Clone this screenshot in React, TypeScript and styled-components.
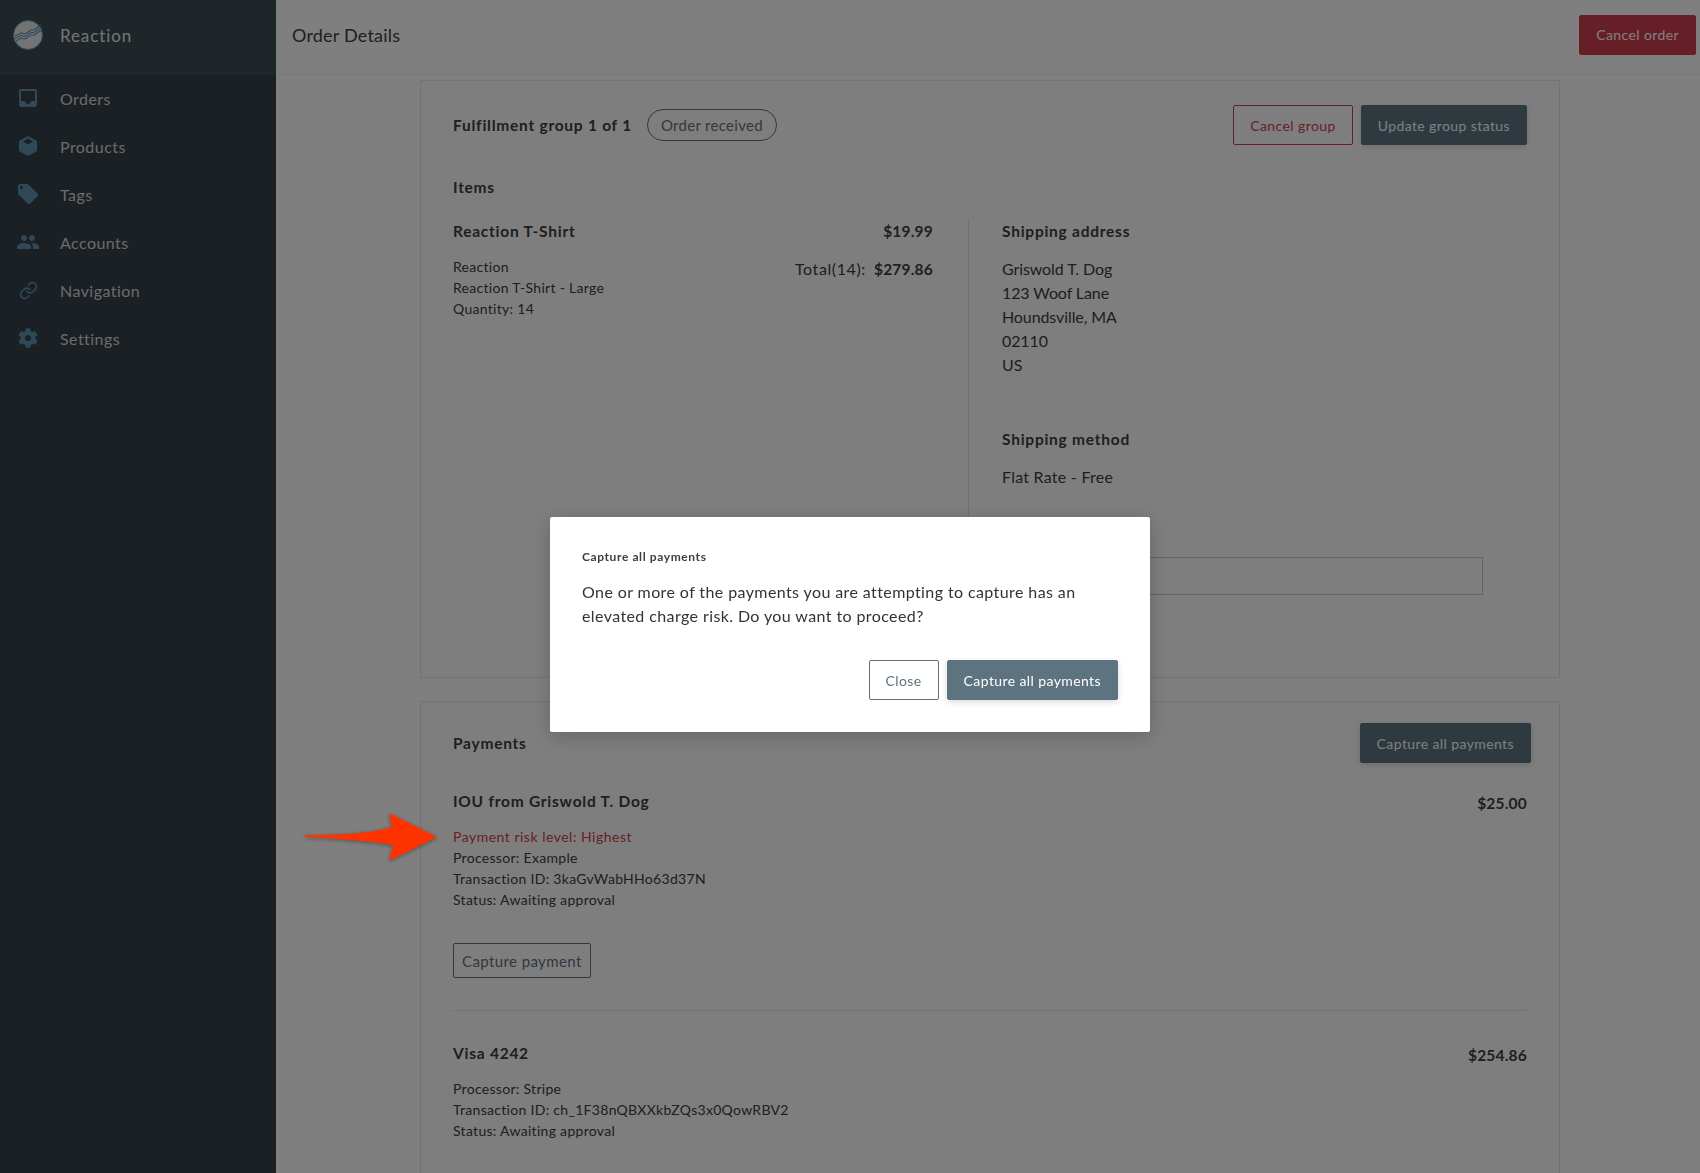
import React from 'react';
import styled, {createGlobalStyle} from 'styled-components';
import {MdInbox, MdLocalOffer, MdPeople} from 'react-icons/md';
import {FaCog} from 'react-icons/fa';
import {Link as LinkIcon} from 'lucide-react';

const GlobalStyle = createGlobalStyle`
	html, body {
		margin: 0;
		height: 100%;
		overflow: hidden;
		background: #fff;
		font-family: Lato, "Open Sans", sans-serif;
		font-size: 16px;
		letter-spacing: 0.6px;
		color: #3e3e3e;
	}
	* { box-sizing: border-box; }
`;

const SIDEBAR_BG = '#36414a';

const Page = styled.div`
	display: flex;
	width: 1700px;
	height: 1173px;
	overflow: hidden;
`;

const Sidebar = styled.aside`
	flex: 0 0 276px;
	background: ${SIDEBAR_BG};
`;

const Brand = styled.div`
	display: flex;
	align-items: center;
	gap: 17px;
	height: 75px;
	padding: 0 0 5px 13px;
	background: #3f4c55;
	color: #e8e8e8;
	font-size: 17px;
	letter-spacing: 0.9px;
`;

const NavList = styled.nav`
	display: flex;
	flex-direction: column;
	margin-top: -1px;
`;

const NavItem = styled.div`
	display: flex;
	align-items: center;
	height: 48px;
	color: #d6d6d6;
	font-size: 16px;
	letter-spacing: 0.45px;
`;

const NavIcon = styled.span`
	display: flex;
	flex: 0 0 60px;
	justify-content: center;
	padding-right: 4px;
	color: #5f93b3;
`;

const Main = styled.main`
	flex: 1;
	min-width: 0;
`;

const Header = styled.header`
	display: flex;
	align-items: center;
	justify-content: space-between;
	height: 75px;
	padding: 0 4px 5px 16px;
	border-bottom: 1px solid #f0f0f0;
	font-size: 18px;
	letter-spacing: 0.2px;
`;

const Button = styled.button<{$variant: 'danger' | 'dangerOutline' | 'dark' | 'light' | 'outline'}>`
	height: ${(p) => (p.$variant === 'outline' ? '35px' : '40px')};
	padding: 0 ${(p) => (p.$variant === 'outline' ? '8px' : '16px')};
	border-radius: 2px;
	border: 1px solid;
	font: inherit;
	font-size: 14px;
	letter-spacing: 0.4px;
	white-space: nowrap;
	${(p) => {
		switch (p.$variant) {
			case 'danger':
				return 'background: #cd3f4c; border-color: #cd3f4c; color: #fff;';
			case 'dangerOutline':
				return 'background: transparent; border-color: #cd3f4c; color: #cd3f4c;';
			case 'dark':
				return 'background: #5d7380; border-color: #5d7380; color: #fff; box-shadow: 0 2px 6px rgba(0,0,0,.15);';
			case 'light':
				return 'background: #fff; border-color: #5d7380; color: #5d7380;';
			default:
				return 'background: transparent; border-color: #5d7380; color: #5d7380; font-size: 15px; letter-spacing: 0.4px;';
		}
	}}
`;

const Content = styled.div`
	width: 1140px;
	margin: 5px 0 0 144px;
`;

const Card = styled.section<{$last?: boolean}>`
	padding: ${(p) => (p.$last ? '21px 32px 40px' : '24px 32px 82px')};
	margin-bottom: 23px;
	border: 1px solid #e6e6e6;
	background: #fdfdfd;
`;

const CardHead = styled.div`
	display: flex;
	align-items: center;
	justify-content: space-between;
	height: 40px;
`;

const Left = styled.div`
	display: flex;
	align-items: center;
	gap: 15px;
`;

const Actions = styled.div<{$bleed?: boolean}>`
	display: flex;
	gap: 8px;
	margin-right: ${(p) => (p.$bleed ? '-4px' : '0')};
`;

const Strong = styled.div`
	font-weight: 700;
	line-height: 24px;
	font-size: 15.5px;
	letter-spacing: 0.75px;
`;

const Price = styled(Strong)`
	letter-spacing: 0.2px;
`;

const Pill = styled.span`
	display: inline-flex;
	align-items: center;
	height: 32px;
	padding: 0 13px;
	border: 1px solid #5d7380;
	border-radius: 16px;
	color: #5d7380;
	font-size: 15px;
	letter-spacing: 0.3px;
`;

const ItemsTitle = styled(Strong)`
	margin: 30px 0 20px;
`;

const Columns = styled.div`
	display: grid;
	grid-template-columns: 515px 1fr;
`;

const ItemsColumn = styled.div`
	padding-right: 35px;
`;

const ShipColumn = styled.div`
	padding-left: 33px;
	border-left: 1px solid #e6e6e6;
`;

const SplitRow = styled.div`
	display: flex;
	justify-content: space-between;
	align-items: flex-start;
`;

const Small = styled.div<{$top?: number}>`
	margin-top: ${(p) => p.$top ?? 0}px;
	font-size: 14px;
	line-height: 21px;
	letter-spacing: 0.3px;
`;

const Risk = styled.div`
	color: #cd3f4c;
	letter-spacing: 0.5px;
`;

const TotalLine = styled.div`
	display: flex;
	gap: 8px;
	margin-top: 14px;
	line-height: 24px;
`;

const Amount = styled(Price)`
	padding-top: 2px;
`;

const Address = styled.div`
	margin-top: 14px;
	line-height: 24px;
	letter-spacing: -0.1px;
`;

const FlatRate = styled(Address)`
	letter-spacing: 0.25px;
`;

const ShipHeading = styled(Strong)`
	margin-top: 50px;
`;

const TrackingInput = styled.div`
	height: 38px;
	margin: 68px 44px 0 0;
	border: 1px solid #c8c8c8;
`;

const PaymentsHead = styled.div`
	margin-top: 26px;
`;

const CaptureRow = styled.div`
	margin: 33px 0 32px;
`;

const Rule = styled.hr`
	margin: 0 0 30px;
	border: 0;
	border-top: 1px solid #e6e6e6;
`;

const Overlay = styled.div`
	position: fixed;
	inset: 0;
	background: rgba(0, 0, 0, 0.5);
`;

const Modal = styled.div`
	position: fixed;
	left: 550px;
	top: 517px;
	width: 600px;
	height: 215px;
	padding: 32px;
	border-radius: 2px;
	background: #fff;
	box-shadow: 0 4px 20px rgba(0, 0, 0, 0.2);
`;

const ModalTitle = styled.div`
	font-size: 12px;
	font-weight: 700;
	line-height: 16px;
`;

const ModalBody = styled.div`
	margin-top: 15px;
	line-height: 24px;
	letter-spacing: 0.4px;
	color: #333;
`;

const ModalActions = styled.div`
	display: flex;
	justify-content: flex-end;
	gap: 8px;
	margin-top: 32px;
`;

const Arrow = styled.svg`
	position: fixed;
	left: 300px;
	top: 808px;
	filter: drop-shadow(0 1px 2px rgba(0, 0, 0, 0.35));
`;

const Logo = () => (
	<svg width="30" height="30" viewBox="0 0 30 30">
		<circle cx="15" cy="15" r="14.5" fill="#e6e6e6" stroke="#4b93bd" />
		<g fill="none" stroke="#4b93bd" strokeWidth="1.1">
			<path d="M2 16 L8 13 L12 14 L18 10 L21 10 L28 5" />
			<path d="M2 18.5 L8 15.5 L12 16.5 L18 12.5 L21 12.5 L28.5 7.5" />
			<path d="M3 21 L8 18 L12 19 L18 15 L21 15 L29 10" />
		</g>
	</svg>
);

const CubeIcon = () => (
	<svg width="18" height="20" viewBox="0 0 18 20">
		<path d="M9 0 L18 5 V15 L9 20 L0 15 V5 Z" fill="currentColor" />
		<path d="M9 2.5 L14 5.5 L9 8.5 L4 5.5 Z" fill={SIDEBAR_BG} />
	</svg>
);

const NAV_ITEMS = [
	{label: 'Orders', icon: <MdInbox size={24} />},
	{label: 'Products', icon: <CubeIcon />},
	{label: 'Tags', icon: <MdLocalOffer size={24} />},
	{label: 'Accounts', icon: <MdPeople size={24} />},
	{label: 'Navigation', icon: <LinkIcon size={19} strokeWidth={2} />},
	{label: 'Settings', icon: <FaCog size={20} />},
];

export default function App() {
	return (
		<>
			<GlobalStyle />
			<Page>
				<Sidebar>
					<Brand>
						<Logo />
						Reaction
					</Brand>
					<NavList>
						{NAV_ITEMS.map((item) => (
							<NavItem key={item.label}>
								<NavIcon>{item.icon}</NavIcon>
								{item.label}
							</NavItem>
						))}
					</NavList>
				</Sidebar>
				<Main>
					<Header>
						Order Details
						<Button $variant="danger">Cancel order</Button>
					</Header>
					<Content>
						<Card>
							<CardHead>
								<Left>
									<Strong>Fulfillment group 1 of 1</Strong>
									<Pill>Order received</Pill>
								</Left>
								<Actions>
									<Button $variant="dangerOutline">Cancel group</Button>
									<Button $variant="dark">Update group status</Button>
								</Actions>
							</CardHead>
							<ItemsTitle>Items</ItemsTitle>
							<Columns>
								<ItemsColumn>
									<SplitRow>
										<Strong>Reaction T-Shirt</Strong>
										<Price>$19.99</Price>
									</SplitRow>
									<SplitRow>
										<Small $top={13}>
											Reaction
											<br />
											Reaction T-Shirt - Large
											<br />
											Quantity: 14
										</Small>
										<TotalLine>
											Total(14):
											<Price>$279.86</Price>
										</TotalLine>
									</SplitRow>
								</ItemsColumn>
								<ShipColumn>
									<Strong>Shipping address</Strong>
									<Address>
										Griswold T. Dog
										<br />
										123 Woof Lane
										<br />
										Houndsville, MA
										<br />
										02110
										<br />
										US
									</Address>
									<ShipHeading>Shipping method</ShipHeading>
									<FlatRate>Flat Rate - Free</FlatRate>
									<TrackingInput />
								</ShipColumn>
							</Columns>
						</Card>
						<Card $last>
							<CardHead>
								<Strong>Payments</Strong>
								<Actions $bleed>
									<Button $variant="dark">Capture all payments</Button>
								</Actions>
							</CardHead>
							<PaymentsHead>
								<SplitRow>
									<Strong>IOU from Griswold T. Dog</Strong>
									<Amount>$25.00</Amount>
								</SplitRow>
								<Small $top={11}>
									<Risk>Payment risk level: Highest</Risk>
									Processor: Example
									<br />
									Transaction ID: 3kaGvWabHHo63d37N
									<br />
									Status: Awaiting approval
								</Small>
							</PaymentsHead>
							<CaptureRow>
								<Button $variant="outline">Capture payment</Button>
							</CaptureRow>
							<Rule />
							<SplitRow>
								<Strong>Visa 4242</Strong>
								<Amount>$254.86</Amount>
							</SplitRow>
							<Small $top={11}>
								Processor: Stripe
								<br />
								Transaction ID: ch_1F38nQBXXkbZQs3x0QowRBV2
								<br />
								Status: Awaiting approval
							</Small>
						</Card>
					</Content>
				</Main>
			</Page>
			<Overlay />
			<Modal>
				<ModalTitle>Capture all payments</ModalTitle>
				<ModalBody>
					One or more of the payments you are attempting to capture has an elevated charge risk. Do you want to proceed?
				</ModalBody>
				<ModalActions>
					<Button $variant="light">Close</Button>
					<Button $variant="dark">Capture all payments</Button>
				</ModalActions>
			</Modal>
			<Arrow width="145" height="60" viewBox="0 0 145 60">
				<path d="M5 27 C40 27 70 26 92 19 L89 5 L137 29 L89 53 L93 37 C70 33 40 31 5 29 Z" fill="#ff3300" />
			</Arrow>
		</>
	);
}
